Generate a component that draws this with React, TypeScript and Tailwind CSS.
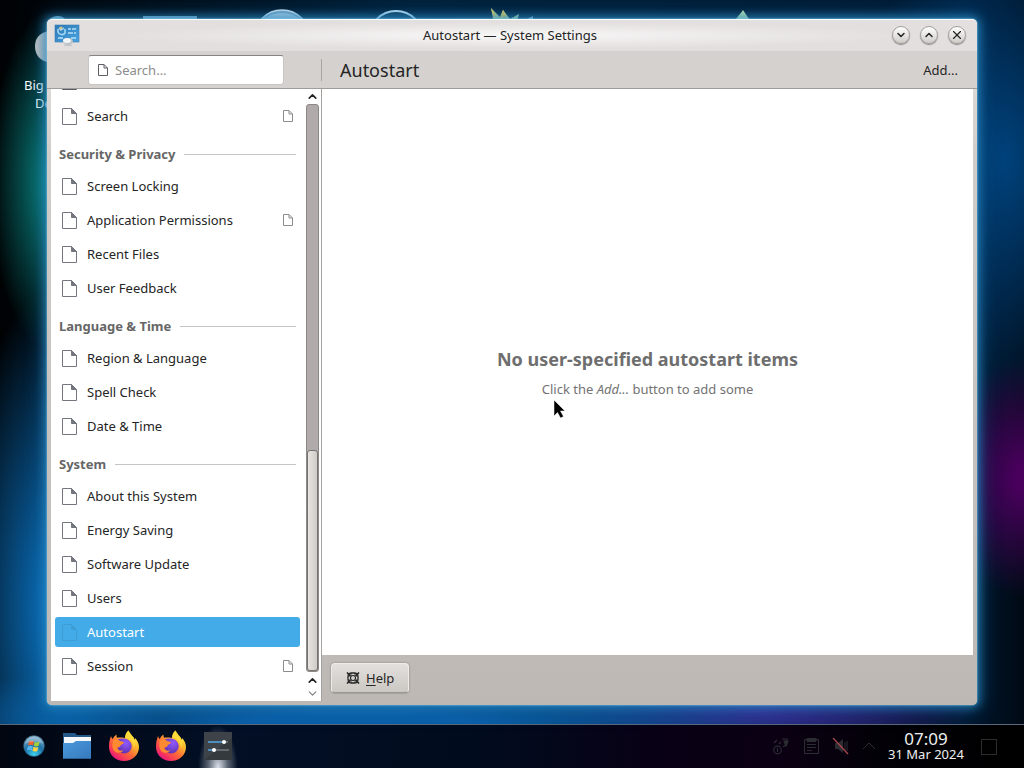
import type { ReactNode } from "react";
import { ChevronDown, ChevronUp, X } from "lucide-react";

type Item = { name: string; badge?: boolean; active?: boolean };

const sections: { title?: string; items: Item[] }[] = [
  { items: [{ name: "Search", badge: true }] },
  {
    title: "Security & Privacy",
    items: [
      { name: "Screen Locking" },
      { name: "Application Permissions", badge: true },
      { name: "Recent Files" },
      { name: "User Feedback" },
    ],
  },
  {
    title: "Language & Time",
    items: [{ name: "Region & Language" }, { name: "Spell Check" }, { name: "Date & Time" }],
  },
  {
    title: "System",
    items: [
      { name: "About this System" },
      { name: "Energy Saving" },
      { name: "Software Update" },
      { name: "Users" },
      { name: "Autostart", active: true },
      { name: "Session", badge: true },
    ],
  },
];

function PageIcon({ className }: { className: string }) {
  return (
    <svg viewBox="0 0 15 17" fill="none" stroke="currentColor" className={className}>
      <path d="M.5.5h9l5 5v11H.5z" />
      <path d="M9.500.5v5h5z" fill="currentColor" />
    </svg>
  );
}

function SmallPageIcon({ className }: { className: string }) {
  return (
    <svg viewBox="0 0 10 12" fill="none" stroke="currentColor" className={className}>
      <path d="M.5.5h5.500l3.500 3.500v7.500h-9z" />
      <path d="M6 .5V4h3.500" />
    </svg>
  );
}

function SettingsLogo() {
  return (
    <svg viewBox="0 0 26 24" className="h-6 w-[26px]">
      <defs>
        <linearGradient id="panel" x1="0" y1="0" x2="1" y2="1">
          <stop offset="0" stopColor="#2c78b4" />
          <stop offset="1" stopColor="#4aa5e2" />
        </linearGradient>
      </defs>
      <rect x="1" y="2" width="24" height="17" fill="url(#panel)" stroke="#3a7eb6" strokeWidth=".6" />
      <path d="M4 6v3a4 4 0 0 0 7 1V6M5 5l2 2 3-2" fill="none" stroke="#a9dbf8" strokeWidth="1.500" />
      <path d="M14 6h3m1 0h4M14 10h5m1 0h2M4 15h5m8 0h5" stroke="#b5e0f8" strokeWidth="1.300" />
      <circle cx="7" cy="5" r="1.500" fill="#d6c489" />
      <ellipse cx="14" cy="18.500" rx="5" ry="3.500" fill="#b9c3c9" />
      <ellipse cx="13" cy="17.500" rx="4" ry="2.500" fill="#f2f4f5" />
      <path d="M10 22.500h8" stroke="#c3c7c9" />
    </svg>
  );
}

function Orb() {
  return (
    <svg viewBox="0 0 24 24" className="size-6">
      <defs>
        <radialGradient id="orb" cx=".5" cy=".9" r=".9">
          <stop offset="0" stopColor="#3fd0f0" />
          <stop offset=".5" stopColor="#1c70a8" />
          <stop offset="1" stopColor="#8fb4cc" />
        </radialGradient>
      </defs>
      <circle cx="12" cy="12" r="10.500" fill="url(#orb)" stroke="#244c66" strokeWidth=".6" />
      <path d="M7 7.500c2-1.200 3.500-1 5 0l-1 4c-1.500-1-3-1-5 0z" fill="#f0642c" />
      <path d="M12.800 7.800c1.500.9 3 .8 5-.2l-1.200 4.200c-1.700.9-3.200.9-4.800 0z" fill="#a3cf3d" />
      <path d="M5.800 12.500c1.800-1 3.400-.9 4.900 0l-1 4c-1.500-1-3.200-1-5 0z" fill="#58b5ee" />
      <path d="M11.500 12.800c1.600 1 3 .9 4.900.1l-1.100 4c-1.800.9-3.300.8-4.800-.1z" fill="#fbd443" />
      <path d="M3 10a9.200 9.200 0 0 1 18 0c-5-3-12-3-18 0z" fill="#fff" opacity=".25" />
    </svg>
  );
}

function Folder() {
  return (
    <svg viewBox="0 0 30 28" className="h-7 w-[30px]">
      <defs>
        <linearGradient id="folder" x1="0" y1="0" x2="1" y2="1">
          <stop offset="0" stopColor="#4b98dc" />
          <stop offset="1" stopColor="#3679bd" />
        </linearGradient>
      </defs>
      <path d="M1 1h12l2 2h14v12H1z" fill="#245887" />
      <path d="M2 5h27v8H2z" fill="#f5f8fa" />
      <path d="M1 11h10l3-2h15v18H1z" fill="url(#folder)" />
      <path d="M1 26.500h28" stroke="#2c6094" />
    </svg>
  );
}

function Firefox() {
  return (
    <svg viewBox="0 0 32 32" className="size-8">
      <defs>
        <linearGradient id="fox" x1=".85" y1=".1" x2=".2" y2=".95">
          <stop offset="0" stopColor="#fff04a" />
          <stop offset=".3" stopColor="#ffb52e" />
          <stop offset=".58" stopColor="#ff6a37" />
          <stop offset=".85" stopColor="#f5325f" />
          <stop offset="1" stopColor="#e31587" />
        </linearGradient>
        <radialGradient id="globe" cx=".6" cy=".3" r=".8">
          <stop offset="0" stopColor="#9059ff" />
          <stop offset="1" stopColor="#5b2fa8" />
        </radialGradient>
      </defs>
      <path
        d="M3 6c.4 1.300 1 2.400 1.700 3C5.500 7.500 6.800 5.500 8.500 4.500c-.2 1.300 0 2.400.6 3.200 2.300-.3 5-.2 7.900.3.200-3 1.200-5.800 3.500-7.500.6 3 3 4.800 5.200 7 .3.800.5 1.500.6 2.200.5-.5.700-1 .8-1.700C29.500 10.500 31 13.500 31 17c0 8-6.700 14-15 14S1 25 1 17c0-4 .6-7.500 2-11z"
        fill="url(#fox)"
      />
      <path d="M10 9.500c3-1.500 8-1.500 11 1 2.500 2 3.300 5 2.300 8-1.200 3.600-4.600 5.500-8.300 4.700C10.500 22.300 8.500 18 10 13.500z" fill="url(#globe)" />
      <path d="M5 10.500c2-1.500 4.500-1.500 6-.2.900.9 2.200 1.200 4 1.400.8.100 1 .5.800 1-.5 1.100-2 1.600-2.900 2.300-.5.700-.3 1.500-1.200 1.900-1.500.6-2.700.4-2.500 1.400.9 2.400 3.800 2.700 6.300 2-3.500 4.500-10.300 2.700-11-3.300C4.300 14.500 4.700 12.200 5 10.500z" fill="#ff8a2f" />
      <path d="M17 8c5.500.5 9.500 5 8.500 11 2.200-3.500 2.300-8 0-11.500l-5-7c-2.200 1.800-3.300 4.700-3.500 7.500z" fill="#ffdc3b" opacity=".8" />
    </svg>
  );
}

function Sliders() {
  return (
    <svg viewBox="0 0 28 28" className="size-7">
      <rect width="28" height="28" fill="#3d4348" />
      <path d="M0 28 28 6v22z" fill="#343a3e" />
      <path d="M4 10h20M4 18h21" stroke="#737a80" strokeWidth="1.500" />
      <path d="M4 10h15M4 18h5" stroke="#4a9bd8" strokeWidth="1.500" />
      <circle cx="20" cy="10" r="2" fill="#fff" />
      <circle cx="10" cy="18" r="2" fill="#fff" />
    </svg>
  );
}

function HelpIcon() {
  return (
    <svg viewBox="0 0 14 14" fill="none" stroke="#252525" className="size-[14px]">
      <rect x="2" y="2" width="10" height="10" rx="3.500" strokeWidth="1.300" />
      <circle cx="7" cy="7" r="2.500" strokeWidth="1.100" />
      <path d="m1 1.500 3.500 3.500m5 4 3.500 3.500M13 1.500 9.500 5m-5 4L1 12.500" strokeWidth="1.700" />
      <path d="M5 2v2.500M9 2v2.500M5 9.500V12M9 9.500V12M2 5h2M2 9h2M10 5h2M10 9h2" strokeWidth=".8" />
    </svg>
  );
}

// icons that peek out from behind the window
function DesktopIcons() {
  return (
    <div className="absolute inset-0 overflow-hidden text-[13px] leading-[18px] text-white">
      <svg viewBox="0 0 800 80" className="absolute top-0 left-0 h-20 w-[800px]">
        <path d="M35 46c0-8 5-13 13-15v31c-8-1-13-7-13-16z" fill="#c4c4c2" />
        <path d="M50 19c4-4 12-4 15 0zM143 16h54v6h-54z" fill="#86b0c6" />
        <circle cx="282" cy="38" r="28" fill="#7fafcf" stroke="#d5e8f2" strokeWidth="1.500" />
        <path d="M262 20c10-9 30-9 40 0z" fill="#bcd8e8" />
        <circle cx="396" cy="38" r="27" fill="#0c3a58" stroke="#c5e8fa" strokeWidth="2" />
        <path d="M494 24 491 8l9 9 3-7 7 9 9-5-2 8z" fill="#bdd592" />
        <path d="m491 8 4 6-1 5zM503 10l4 6-7 2z" fill="#f2d24e" />
        <path d="M525 20l8-4v5z" fill="#7dbaca" />
        <path d="M735 22c1-5 5-7 8-12l6 9v3z" fill="#c5eeae" />
      </svg>
      <p className="absolute top-[76px] left-[6px] w-24">
        <span className="block pl-[18px]">Big Buck</span>
        <span className="block pl-[29px]">Demo</span>
      </p>
    </div>
  );
}

function TitleButton({ label, children }: { label: string; children: ReactNode }) {
  return (
    <button
      aria-label={label}
      className="flex size-[18px] items-center justify-center rounded-full border border-[#a29f9c] bg-linear-to-b from-white to-[#cfccc9] text-[#222] shadow-[0_1px_1px_#8a8886]"
    >
      {children}
    </button>
  );
}

function Sidebar() {
  return (
    <div className="flex w-[271px] shrink-0 border-r border-[#a5a19e] bg-white">
      <nav className="min-w-0 flex-1 overflow-hidden">
        <div className="-mt-[25px] flex h-[35px] items-center pl-[11px] text-[#555c66]">
          <PageIcon className="h-[17px] w-[15px]" />
        </div>
        {sections.map((s, i) => (
          <section key={i}>
            {s.title && (
              <div className="flex h-9 items-center gap-[9px] pt-[6px] pr-[9px] pl-2">
                <h2 className="font-bold text-[#666]">{s.title}</h2>
                <span className="h-px flex-1 bg-[#c4c4c4]" />
              </div>
            )}
            <ul>
              {s.items.map((item) => (
                <li key={item.name} className="px-1 py-[2px]">
                  <button
                    className={`flex h-[30px] w-[245px] items-center gap-[10px] rounded-[3px] px-[7px] text-left ${
                      item.active ? "bg-[#43ace8] text-white" : "text-[#252525]"
                    }`}
                  >
                    <PageIcon className={item.active ? "h-[17px] w-[15px] text-[#3d9ed6]" : "h-[17px] w-[15px] text-[#73767e]"} />
                    <span className="flex-1">{item.name}</span>
                    {item.badge && <SmallPageIcon className="h-3 w-[10px] text-[#8c8c8c]" />}
                  </button>
                </li>
              ))}
            </ul>
          </section>
        ))}
      </nav>
      <div className="flex w-4 shrink-0 flex-col items-center pr-[2px] text-[#222]">
        <ChevronUp size={13} strokeWidth={3} className="h-[15px]" />
        <div className="flex w-[13px] flex-1 flex-col justify-end rounded-[3px] border border-[#8c8886] bg-[#b0abaa]">
          <div className="h-[39%] rounded-[3px] border border-[#777370] bg-linear-to-r from-[#e7e4e1] to-[#cfccc8]" />
        </div>
        <ChevronUp size={13} strokeWidth={3} className="mt-[2px]" />
        <ChevronDown size={13} strokeWidth={2} className="mb-px text-[#7d7d7d]" />
      </div>
    </div>
  );
}

function SettingsWindow() {
  return (
    <main className="relative flex flex-1 flex-col rounded-[5px] border-t border-white bg-[#c1bcb7] bg-linear-to-b from-[#e6e4e2] via-[#d0ccc9] via-20% to-[#bdb8b4] px-1 pb-1 shadow-[0_0_2px_0_#a5e2fa,0_0_10px_3px_#2a8cc4bb,0_0_20px_4px_#1a6aa466]">
      <header className="-mx-1 grid h-[31px] grid-cols-[1fr_auto_1fr] items-center rounded-t-[5px] bg-[radial-gradient(ellipse_at_center,#f8f7f7_0%,#e2dfde_60%)] pr-[11px] pb-px pl-[7px]">
        <SettingsLogo />
        <h1 className="text-[#242424]">Autostart — System Settings</h1>
        <div className="flex justify-end gap-[10px]">
          <TitleButton label="Minimize">
            <ChevronDown size={12} strokeWidth={3} />
          </TitleButton>
          <TitleButton label="Maximize">
            <ChevronUp size={12} strokeWidth={3} />
          </TitleButton>
          <TitleButton label="Close">
            <X size={14} strokeWidth={2} />
          </TitleButton>
        </div>
      </header>

      <div className="-mx-1 flex h-[38px] items-center border-b border-[#9f9b98] bg-[#d5d1ce] px-1">
        <div className="flex h-[22px] w-[271px] shrink-0 items-center border-r border-[#a9a5a2] pl-[37px]">
          <label className="flex h-[30px] w-[196px] items-center gap-[7px] rounded-[3px] border border-[#c9c5c2] border-t-[#86827f] bg-white px-[9px] text-[#5d5d66]">
            <SmallPageIcon className="h-3 w-[10px] shrink-0" />
            <input
              type="text"
              aria-label="Search"
              placeholder="Search..."
              className="w-full min-w-0 bg-transparent outline-none placeholder:text-[#8c8c8c]"
            />
          </label>
        </div>
        <h2 className="flex-1 pl-[18px] text-[18px] leading-6 text-[#252525]">Autostart</h2>
        <button className="px-[15px] text-[#252525]">Add...</button>
      </div>

      <div className="flex flex-1">
        <Sidebar />
        <div className="flex min-w-0 flex-1 flex-col">
          <div className="flex flex-1 flex-col items-center justify-center gap-[9px] bg-white text-center text-[#737373]">
            <h3 className="text-[18px] leading-6 font-bold text-[#6e6e6e]">No user-specified autostart items</h3>
            <p>
              Click the <em>Add...</em> button to add some
            </p>
          </div>
          <footer className="flex h-[46px] items-center px-[9px]">
            <button className="flex h-[30px] items-center gap-[6px] rounded-[4px] border border-[#eeece9] border-b-[#999592] bg-linear-to-b from-[#e3e0dd] to-[#cbc7c3] px-[14px] text-[#252525] shadow-[0_0_2px_#77736f]">
              <HelpIcon />
              <span>
                <span className="underline underline-offset-2">H</span>elp
              </span>
            </button>
          </footer>
        </div>
      </div>
    </main>
  );
}

function Tray() {
  return (
    <div className="flex items-center gap-[10px] pb-px text-[#2c2c33]">
      <svg viewBox="0 0 20 20" fill="none" stroke="currentColor" strokeWidth="1.200" className="size-5">
        <circle cx="6.500" cy="14" r="3.800" />
        <path d="M6.500 12v4M3 7l3-3M8 8l2-2M11 3h5v5l-4 3" />
        <path d="m13 5 4 0-2 5z" fill="currentColor" />
      </svg>
      <svg viewBox="0 0 20 20" fill="none" stroke="currentColor" className="size-5">
        <path d="M6 3.500H3.500v14h14v-14H15" />
        <path d="M6 2.500h9v3H6z" fill="currentColor" />
        <path d="M6 8.500h9M6 11.500h9M6 14.500h5" />
      </svg>
      <svg viewBox="0 0 20 20" className="size-5">
        <path d="M4 7h3l5-4v14l-5-4H4z" fill="currentColor" />
        <path d="M14 6v8m2-9v10" stroke="currentColor" />
        <path d="m2 2 15 16" stroke="#a8474d" strokeWidth="1.300" />
      </svg>
      <svg viewBox="0 0 16 20" fill="none" stroke="currentColor" className="h-5 w-4">
        <path d="m2 13 6-6 6 6" />
      </svg>
    </div>
  );
}

function Taskbar() {
  return (
    <footer className="flex h-11 shrink-0 items-center border-t border-[#59697a] bg-[linear-gradient(90deg,#010611_0%,#020f25_22%,#010b1d_48%,#090015_65%,#0b0013_76%,#010105_88%,#000_100%)]">
      <div className="flex flex-1 items-center pl-[22px]">
        <button aria-label="Start menu" className="mr-4 pb-[2px]">
          <Orb />
        </button>
        <button aria-label="Files" className="mr-4 pb-[2px]">
          <Folder />
        </button>
        <button aria-label="Firefox" className="mr-[15px] pb-[2px]">
          <Firefox />
        </button>
        <button aria-label="Firefox window" className="mr-[11px] pb-[2px]">
          <Firefox />
        </button>
        <button
          aria-label="System Settings"
          className="flex h-[43px] w-10 items-center justify-center bg-[radial-gradient(ellipse_at_bottom,#dde3ec_0%,#596270_35%,transparent_70%)] pb-[2px]"
        >
          <Sliders />
        </button>
      </div>
      <Tray />
      <time className="flex w-[98px] flex-col items-center pb-[2px] text-[#eee]">
        <span className="text-[17px] leading-[17px]">07:09</span>
        <span className="leading-[14px]">31 Mar 2024</span>
      </time>
      <button aria-label="Show desktop" className="mr-[27px] ml-[6px] size-4 border border-[#2d2d2d]" />
    </footer>
  );
}

export default function App() {
  return (
    <div className="flex min-h-screen flex-col bg-black font-['Noto_Sans',sans-serif] text-[13px] leading-[18px]">
      <div className="relative flex flex-1 flex-col bg-[#00101f] bg-[radial-gradient(ellipse_60px_170px_at_50px_25%,#0a8580,transparent),radial-gradient(ellipse_90px_120px_at_100%_66%,#48005c_10%,transparent),radial-gradient(ellipse_140px_260px_at_98%_22%,#00427c,transparent),radial-gradient(ellipse_110px_320px_at_60px_84%,#0b70bd_10%,transparent),radial-gradient(ellipse_55%_60px_at_35%_100%,#0a5fa8_20%,transparent),radial-gradient(ellipse_220px_60px_at_74%_98%,#4a1288,transparent),linear-gradient(90deg,#000204,#00203a_40%,#001a33_94%,#000913)] px-[47px] pt-[19px] pb-[19px]">
        <DesktopIcons />
        <SettingsWindow />
        <svg viewBox="0 0 14 22" className="pointer-events-none absolute top-[399px] left-[553px] h-[22px] w-[14px]">
          <path d="M1 1v16l3.500-3.500L7.500 19l3-1.500-3-5.500H12z" fill="#000" stroke="#fff" strokeWidth=".5" />
        </svg>
      </div>
      <Taskbar />
    </div>
  );
}
